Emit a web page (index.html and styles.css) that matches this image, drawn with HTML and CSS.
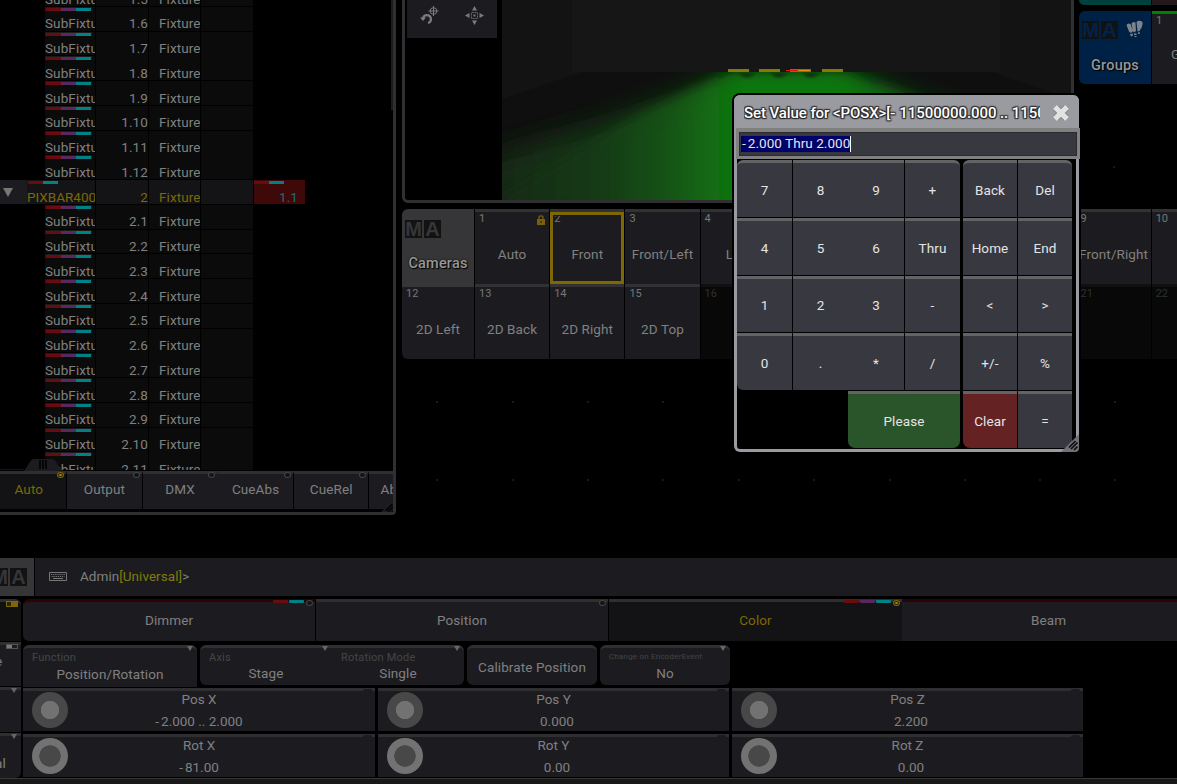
FILE: index.html
```html
<!DOCTYPE html>
<html lang="en">
<head>
<meta charset="utf-8">
<title>Set Value</title>
<link rel="stylesheet" href="styles.css">
</head>
<body>
<main class="desk">
  <svg class="canvas-dots" width="1177" height="558" fill="#191919">
    <path d="M436 401h2v2h-2zM512 401h2v2h-2zM587 401h2v2h-2zM662 401h2v2h-2zM1114 401h2v2h-2zM436 479h2v2h-2zM512 479h2v2h-2zM587 479h2v2h-2zM662 479h2v2h-2zM738 479h2v2h-2zM813 479h2v2h-2zM889 479h2v2h-2zM964 479h2v2h-2zM1039 479h2v2h-2zM1114 479h2v2h-2zM1113 166h2v2h-2z"/>
  </svg>

  <section class="win sheet">
    <div class="scrollbar"></div>
    <div class="rows">
      <div class="row"><b class="name"><i class="marks"></i>SubFixtu</b><b class="id">1.5</b><b class="type">Fixture</b><b class="pad"></b></div>
      <div class="row"><b class="name"><i class="marks"></i>SubFixtu</b><b class="id">1.6</b><b class="type">Fixture</b><b class="pad"></b></div>
      <div class="row joined"><b class="name"><i class="marks"></i>SubFixtu</b><b class="id">1.7</b><b class="type">Fixture</b><b class="pad"></b></div>
      <div class="row"><b class="name"><i class="marks"></i>SubFixtu</b><b class="id">1.8</b><b class="type">Fixture</b><b class="pad"></b></div>
      <div class="row"><b class="name"><i class="marks"></i>SubFixtu</b><b class="id">1.9</b><b class="type">Fixture</b><b class="pad"></b></div>
      <div class="row"><b class="name"><i class="marks"></i>SubFixtu</b><b class="id">1.10</b><b class="type">Fixture</b><b class="pad"></b></div>
      <div class="row joined"><b class="name"><i class="marks"></i>SubFixtu</b><b class="id">1.11</b><b class="type">Fixture</b><b class="pad"></b></div>
      <div class="row"><b class="name"><i class="marks"></i>SubFixtu</b><b class="id">1.12</b><b class="type">Fixture</b><b class="pad"></b></div>
      <div class="row parent"><b class="fold"><svg width="10" height="9"><path d="M0 0h10L5 9z" fill="#777"/></svg></b><b class="name"><i class="marks two"></i>PIXBAR400</b><b class="id">2</b><b class="type">Fixture</b><b class="pad"></b><b class="value"><i class="marks two"></i>1.1</b></div>
      <div class="row"><b class="name"><i class="marks"></i>SubFixtu</b><b class="id">2.1</b><b class="type">Fixture</b><b class="pad"></b></div>
      <div class="row"><b class="name"><i class="marks"></i>SubFixtu</b><b class="id">2.2</b><b class="type">Fixture</b><b class="pad"></b></div>
      <div class="row"><b class="name"><i class="marks"></i>SubFixtu</b><b class="id">2.3</b><b class="type">Fixture</b><b class="pad"></b></div>
      <div class="row"><b class="name"><i class="marks"></i>SubFixtu</b><b class="id">2.4</b><b class="type">Fixture</b><b class="pad"></b></div>
      <div class="row"><b class="name"><i class="marks"></i>SubFixtu</b><b class="id">2.5</b><b class="type">Fixture</b><b class="pad"></b></div>
      <div class="row joined"><b class="name"><i class="marks"></i>SubFixtu</b><b class="id">2.6</b><b class="type">Fixture</b><b class="pad"></b></div>
      <div class="row"><b class="name"><i class="marks"></i>SubFixtu</b><b class="id">2.7</b><b class="type">Fixture</b><b class="pad"></b></div>
      <div class="row"><b class="name"><i class="marks"></i>SubFixtu</b><b class="id">2.8</b><b class="type">Fixture</b><b class="pad"></b></div>
      <div class="row"><b class="name"><i class="marks"></i>SubFixtu</b><b class="id">2.9</b><b class="type">Fixture</b><b class="pad"></b></div>
      <div class="row joined"><b class="name"><i class="marks"></i>SubFixtu</b><b class="id">2.10</b><b class="type">Fixture</b><b class="pad"></b></div>
      <div class="row"><b class="name"><i class="marks"></i>SubFixtu</b><b class="id">2.11</b><b class="type">Fixture</b><b class="pad"></b></div>
    </div>
    <svg class="handle" width="64" height="12"><path d="M0 10.5h24" stroke="#151515"/><path d="M24 12L31 1.500q1-1.500 3-1.500h18q2 0 3 1.500L62 12z" fill="#1c1c20"/><path d="M39 1h2v9h-2zM42 1h2v9h-2zM45 1h2v9h-2z" fill="#050505"/></svg>
    <div class="layers">
      <div class="layer on">Auto<i class="radio"></i></div>
      <div class="layer">Output<i class="radio"></i></div>
      <div class="layer flush">DMX<i class="radio"></i></div>
      <div class="layer">CueAbs<i class="radio"></i></div>
      <div class="layer">CueRel<i class="radio"></i></div>
      <div class="layer last">Ab</div>
    </div>
    <svg class="grip" width="18" height="18"><path d="M18 0v14q0 4-4 4H0z" fill="#1c1c20"/><path d="M8 13.500l6.500-6.500M10 15l6.500-6.500M13 16l3.500-3.500" stroke="#000" stroke-width="1.500"/></svg>
  </section>

  <section class="win viewer">
    <div class="tools">
      <svg width="19" height="19" viewBox="0 0 19 19" fill="none" stroke="#7b7b7b"><path d="M3 12.500a4 4 0 1 1 5 4.500" stroke-width="2.200"/><path d="M0 11.500h6L3 15z" fill="#7b7b7b" stroke="none"/><circle cx="13.500" cy="5" r="3.300"/><path d="M13.500 0v10M8.500 5h10"/></svg>
      <svg width="19" height="19" viewBox="0 0 19 19" fill="#7b7b7b"><path d="M9.500 0l2.500 4.500H7zM9.500 19l2.500-4.500H7zM0 9.500L4.500 7v5zM19 9.500L14.500 7v5zM8.500 8.500h2v2h-2z"/><path d="M6.500 6.500h6v6h-6z" fill="none" stroke="#6a6a6a" stroke-dasharray="2 1"/></svg>
    </div>
    <svg class="scene" width="569" height="200" viewBox="502 0 569 200">
      <defs>
        <linearGradient id="beam" x1="502" x2="1070" y1="0" y2="0" gradientUnits="userSpaceOnUse">
          <stop offset="0" stop-color="#142a15"/><stop offset=".18" stop-color="#153c16"/><stop offset=".3" stop-color="#145514"/><stop offset=".37" stop-color="#126c12"/><stop offset=".42" stop-color="#107810"/><stop offset=".6" stop-color="#107810"/><stop offset=".75" stop-color="#144d16"/><stop offset="1" stop-color="#152a16"/>
        </linearGradient>
        <filter id="wide" x="-20%" y="-60%" width="140%" height="220%"><feGaussianBlur stdDeviation="14"/></filter>
        <filter id="soft" x="-20%" y="-20%" width="140%" height="140%"><feGaussianBlur stdDeviation="6"/></filter>
        <filter id="dim" x="-50%" y="-100%" width="200%" height="300%"><feGaussianBlur stdDeviation="1.500"/></filter>
        <clipPath id="floor"><path d="M502 99l80-27h410l79 27v101H502z"/></clipPath>
      </defs>
      <path d="M502 0h569v200H502z" fill="#131313"/>
      <path d="M572 0h428v72H572z" fill="#161616"/>
      <path d="M502 99l80-27h410l79 27v101H502z" fill="#0f0f0f"/>
      <g clip-path="url(#floor)">
        <path d="M440 170L600 125l90-30 48-25h108l45 21 80 30 180 60v80H440z" fill="url(#beam)" filter="url(#wide)"/>
        <path d="M480 210L580 150l60-36 45-20 45-19h113l55 18 50 20 60 97z" fill="url(#beam)" filter="url(#soft)" opacity=".85"/>
        <path d="M738 73h18l-6 4h-6zM770 73h18l-6 4h-6zM802 73h18l-6 4h-6z" fill="#0a2e0a" filter="url(#dim)"/>
      </g>
      <path d="M728 69h21v3h-21zM759 69h21v3h-21zM822 69h21v3h-21z" fill="#8c7705"/>
      <path d="M790 69h21v3h-21z" fill="#b85a00"/><path d="M786 70.500h12" stroke="#f20d0d"/><path d="M798 70.500h12" stroke="#e88a10"/>
    </svg>
  </section>

  <section class="pool cameras">
    <div class="head"><span class="ma"><i>M</i><i>A</i></span><span class="title">Cameras</span></div>
    <div class="cell"><i class="no">1</i>Auto<svg class="lock" width="8" height="10"><path d="M0 4h8v6H0z" fill="#7c5f06"/><path d="M2 5V2.500q0-1.700 2-1.700t2 1.700V5" fill="none" stroke="#7c5f06" stroke-width="1.300"/><path d="M3.500 6h1v2h-1z" fill="#1c1c20"/></svg></div>
    <div class="cell sel"><i class="no">2</i>Front</div>
    <div class="cell"><i class="no">3</i>Front/Left</div>
    <div class="cell"><i class="no">4</i>Left</div>
    <div class="cell"></div>
    <div class="cell"></div>
    <div class="cell"></div>
    <div class="cell"></div>
    <div class="cell"><i class="no">9</i>Front/Right</div>
    <div class="cell"><i class="no">10</i></div>
    <div class="cell corner"><i class="no">12</i>2D Left</div>
    <div class="cell"><i class="no">13</i>2D Back</div>
    <div class="cell"><i class="no">14</i>2D Right</div>
    <div class="cell"><i class="no">15</i>2D Top</div>
    <div class="cell empty"><i class="no">16</i></div>
    <div class="cell empty"></div>
    <div class="cell empty"></div>
    <div class="cell empty"></div>
    <div class="cell empty"></div>
    <div class="cell empty"><i class="no">21</i></div>
    <div class="cell empty"><i class="no">22</i></div>
  </section>

  <section class="groups">
    <div class="prev"></div><div class="prev next"></div>
    <div class="head"><span class="ma"><i>M</i><i>A</i></span>
      <svg class="lamps" width="18" height="18" fill="#7d8389"><path d="M.5 5Q2 2.500 4.500 4l2.500 7-2 2-2-1.500zM5.500 3.500Q7 1 9.500 2.500L10 11l-2 1.500-1.200-1.500zM10.500 2q2.500-2.500 6 0 .8 4.500-3 9l-2 .5zM4 14l2.500-.5.5 2-2 1zM8 13.500h2.500v1.500H8zM12 12.500l2-.5-.5 2H12zM8.500 16h2v1h-2z"/></svg>
      <span class="title">Groups</span></div>
    <div class="cell"><i class="no">1</i>G</div>
  </section>

  <section class="dialog">
    <header><span class="caption">Set Value for &lt;POSX&gt;[<s>-</s>11500000.000 .. 11500000.000]</span>
      <svg width="18" height="18" viewBox="0 0 18 18"><path d="M3.500 3.500l11 11M14.500 3.500l-11 11" stroke="#5c5c60" stroke-width="6.500"/><path d="M3 3l12 12M15 3L3 15" stroke="#e2e2e2" stroke-width="5.500"/></svg></header>
    <div class="entry"><div class="field"><mark><s>-</s>2.000 Thru 2.000</mark></div></div>
    <div class="keys">
      <div class="pad-a">
        <div class="key tl">7</div><div class="key flush">8</div><div class="key">9</div><div class="key end tr">+</div>
        <div class="key">4</div><div class="key flush">5</div><div class="key">6</div><div class="key end">Thru</div>
        <div class="key">1</div><div class="key flush">2</div><div class="key">3</div><div class="key end">-</div>
        <div class="key bl">0</div><div class="key flush">.</div><div class="key">*</div><div class="key end">/</div>
        <div class="key end please">Please</div>
      </div>
      <div class="pad-b">
        <div class="key tl">Back</div><div class="key end tr">Del</div>
        <div class="key">Home</div><div class="key end">End</div>
        <div class="key">&lt;</div><div class="key end">&gt;</div>
        <div class="key">+/-</div><div class="key end">%</div>
        <div class="key clear">Clear</div><div class="key end">=</div>
      </div>
    </div>
    <svg class="grip" width="18" height="18"><path d="M18 0v14q0 4-4 4H0z" fill="#707077"/><path d="M8 13.500l6.500-6.500M10 15l6.500-6.500M13 16l3.500-3.500" stroke="#0c0c0c" stroke-width="1.700"/></svg>
  </section>
</main>

<div class="cmd">
  <div class="badge"><span class="ma"><i>M</i><i>A</i></span></div>
  <div class="line">
    <svg width="18" height="9"><path d="M.5.500h17v8H.5z" fill="none" stroke="#777"/><path d="M2 2.500h14M2.500 4.500h13" stroke="#777" stroke-dasharray="1.200 .9"/><path d="M4 6.500h10" stroke="#777"/></svg>
    <span>Admin<em>[Universal]</em>&gt;</span>
  </div>
</div>

<div class="encoders">
  <div class="side">
    <div class="s0"><i class="toggle gold"></i></div>
    <div class="s1"><i class="toggle"></i>e</div>
    <div class="s2"><i class="tri"></i></div>
    <div class="s3"><i class="tri"></i>al</div>
  </div>
  <div class="bank">
    <div class="tabs">
      <div class="tab warm first">Dimmer<i class="chips"><u></u><u class="c"></u></i><i class="radio"></i></div>
      <div class="tab">Position<i class="radio"></i></div>
      <div class="tab on">Color<i class="chips"><u></u><u class="p"></u><u class="c"></u></i><i class="radio"></i></div>
      <div class="tab warm">Beam</div>
    </div>
    <div class="options">
      <div class="opt fn"><small>Function</small><span>Position/Rotation</span><i class="tri"></i></div>
      <div class="opt axis"><small>Axis</small><span>Stage</span><i class="tri"></i></div>
      <div class="opt rot"><small>Rotation Mode</small><span>Single</span><i class="tri"></i></div>
      <div class="opt cal"><span>Calibrate Position</span></div>
      <div class="opt chg"><small>Change on EncoderEvent</small><span>No</span><i class="tri"></i></div>
    </div>
    <div class="dials">
      <div class="dial"><i class="knob"></i><span>Pos X</span><span><s>-</s>2.000 .. 2.000</span></div>
      <div class="dial"><i class="knob"></i><span>Pos Y</span><span class="pos">0.000</span></div>
      <div class="dial"><i class="knob"></i><span>Pos Z</span><span class="pos">2.200</span></div>
      <div class="dial"><i class="knob inv"></i><span>Rot X</span><span><s>-</s>81.00</span></div>
      <div class="dial"><i class="knob inv"></i><span>Rot Y</span><span class="pos">0.00</span></div>
      <div class="dial"><i class="knob inv"></i><span>Rot Z</span><span class="pos">0.00</span></div>
    </div>
  </div>
</div>
<div class="edge"></div>
</body>
</html>
```

FILE: styles.css
```css
* { box-sizing: border-box; }
body {
  margin: 0; width: 1177px; height: 784px; overflow: hidden;
  background: #000; color: #808080;
  font: 400 13.5px/18px Roboto, "Noto Sans", sans-serif;
  letter-spacing: .1px;
}
i, em, b { font-style: normal; font-weight: 400; }
s { text-decoration: none; margin-right: 2px; }
svg { display: block; flex: none; }

.desk { position: relative; height: 558px; overflow: hidden; }
.canvas-dots { position: absolute; left: 0; top: 0; }
.win { position: absolute; background: #000; border: 2px solid #303032; }

/* fixture sheet */
.sheet {
  left: -2px; top: -4px; width: 398px; height: 519px;
  border-width: 2px 3px 3px 2px; border-radius: 0 0 4px 0;
  padding-top: 2px; overflow: hidden;
}
.scrollbar { position: absolute; right: 0; top: 0; width: 2px; height: 112px; background: #1b1b20; }
.rows { height: 470px; overflow: hidden; }
.rows .row:first-child { margin-top: -18px; }
.row {
  display: grid; grid-template-columns: 50px 52px 51px 52px 51px;
  column-gap: 1px; height: 24.75px; padding-left: 45px;
}
.row b { position: relative; background: #0b0b0b; border-bottom: 1px solid #000; padding-top: 7.700px; overflow: hidden; white-space: nowrap; }
.row.joined b:not(.name) { border-bottom-color: #0b0b0b; }
.row .id { text-align: right; }
.row .type { padding-left: 10px; }
.marks {
  position: absolute; left: 0; top: 0; width: 47px; height: 4px;
  border: 1px solid #1b1b1c; border-bottom-width: 0;
  background: linear-gradient(90deg, #6b0b0e 15px, #56295f 15px 30px, #008183 30px);
}
.marks.two { width: 31px; border: 0; left: 1px; top: 1px; height: 3px; background: linear-gradient(90deg, #6b0b0e 15px, #008183 15px 30px, transparent 30px); }
.row.parent { grid-template-columns: 26px 68px 52px 51px 52px 51px; padding-left: 0; }
.row.parent b { background: #141416; color: #7d6805; }
.row.parent .fold { background: #1b1b20; margin-right: -1px; padding: 8px 0 0 3px; }
.row.parent .name { letter-spacing: 0; }
.row.parent .value { background: #400909; color: #167076; text-align: right; padding-right: 7px; }
.row.parent .value .marks { left: 0; }
.handle { position: absolute; left: 0; top: 461px; }
.layers { display: flex; height: 38px; margin-left: -8.500px; margin-top: 1px; width: 460px; }
.layer {
  position: relative; width: 75.600px; flex: none; height: 38px; padding-top: 6px; text-align: center;
  background: #1c1c20; border-top: 3px solid #2f2f31; border-right: 1px solid #000;
}
.layer.flush { border-right-color: #1c1c20; }
.layer.on { background: #131315; color: #7d6805; }
.layer.last { text-align: left; padding-left: 11px; }
.radio { position: absolute; right: 2px; top: -2px; width: 7px; height: 6px; border: 1px solid #444; border-radius: 50%; background: #141414; }
.on .radio { border-color: #7d6805; background: radial-gradient(#a08505 1px, #2a2402 1.500px); }
.sheet .grip { position: absolute; right: -3px; bottom: -3px; }

/* 3D viewer */
.viewer { left: 402px; top: -8px; width: 672px; height: 211px; border-width: 3px; border-radius: 6px; display: flex; padding: 5px 0 0 2px; overflow: hidden; }
.tools { flex: none; display: flex; justify-content: space-between; align-items: flex-start; width: 90px; height: 38px; padding: 6px 13px 0 13px; background: #1c1c20; margin-right: 5px; }

/* pools */
.cell {
  position: relative; background: #1c1c20; border-top: 3px solid #323234;
  text-align: center; padding-top: 33px; overflow: hidden; white-space: nowrap;
}
.no { position: absolute; left: 4px; top: 0; font-size: 11px; line-height: 14px; letter-spacing: 0; color: #777; }
.cameras {
  position: absolute; left: 402px; top: 209px;
  display: grid; grid-template-columns: 72px repeat(10, 74.200px); grid-auto-rows: 75px; column-gap: 1px;
}
.head { position: relative; background: #363638; border-radius: 6px 0 0 0; display: flex; flex-direction: column; }
.title { color: #979797; font-weight: 500; font-size: 14.500px; text-align: center; letter-spacing: .2px; text-shadow: 0 0 2px #000, 1px 1px 1px #000; }
.ma { display: flex; gap: 2px; }
.ma i { width: 17px; height: 18px; background: #121213; color: #363638; font: 700 20px/19px "Liberation Sans", sans-serif; display: flex; justify-content: center; letter-spacing: 0; overflow: hidden; }
.cameras .ma { margin: 11px 0 0 3px; }
.cameras .title { margin-top: 17px; }
.cell.sel::after { content: ""; position: absolute; inset: 0; border: 3px solid #7d6805; box-shadow: inset 0 0 0 1px #1d1b13; }
.cell.corner { border-radius: 0 0 0 6px; border-top-color: #363638; }
.cell.empty { background: #080808; border-top-color: #101010; }
.cell.empty .no { color: #303030; }
.lock { position: absolute; right: 4px; top: 3px; }

.groups { position: absolute; left: 1079px; top: 0; display: grid; grid-template: 5px 73px / 72px 74px; gap: 6px 1px; }
.prev { background: #00413f; border-radius: 0 0 0 6px; }
.prev.next { background: linear-gradient(#2a1519 2px, #1c1c20 2px); border-radius: 0; }
.groups .head { background: #002146; border-radius: 6px 0 0 6px; }
.groups .ma { margin: 10px 0 0 3px; }
.groups .ma i { color: #00234b; }
.groups .title { margin-top: 18px; }
.lamps { position: absolute; left: 47px; top: 9px; }
.groups .cell { border-top-color: #008100; text-align: left; padding: 31px 0 0 19px; }

/* value dialog */
.dialog {
  position: absolute; left: 734px; top: 95px; width: 345px; height: 357px;
  background: #000; border: solid #9a9ba0; border-width: 0 3px 3px; border-radius: 6px;
  box-shadow: 0 0 0 2px #000; color: #e4e4e4;
}
.dialog header {
  display: flex; justify-content: space-between; align-items: center;
  height: 33px; margin: 0 -3px; padding: 2px 9px 0 10px; background: #9a9ba0; border-radius: 6px 6px 0 0;
}
.caption {
  width: 296px; overflow: hidden; white-space: nowrap; color: #fff; font-weight: 500; font-size: 15px; letter-spacing: -.08px;
  line-height: 24px; text-shadow: 0 0 2px #222, 1px 1px 1px #222, -1px -1px 1px #333, 1px -1px 1px #333, -1px 1px 1px #333;
}
.caption s { margin-right: 4px; }
.entry { margin: 0 -4px 0 -1px; height: 31px; background: #808080; padding: 4px 3px 3px; }
.field { height: 24px; background: #383840; border: 1px solid #2b2b2e; padding: 3px 1px; display: flex; }
mark { background: #00006a; color: #e4e4e4; line-height: 15px; padding-left: 1px; border-right: 1px solid #fff; letter-spacing: .05px; }
.keys { display: flex; gap: 3px; padding-top: 1px; }
.pad-a, .pad-b { display: grid; grid-auto-rows: 57.750px; }
.pad-a { grid-template-columns: 56px 55px 57px 55px; }
.pad-b { grid-template-columns: 55px 54px; }
.key {
  background: #383840; border-top: 3px solid #636366; margin: 0 1px 1px 0;
  display: flex; align-items: center; justify-content: center;
}
.key.flush { margin-right: 0; }
.key.end { margin-right: 0; }
.tl { border-top-left-radius: 6px; }
.tr { border-top-right-radius: 6px; }
.bl { border-bottom-left-radius: 6px; }
.please { grid-column: 3 / 5; background: #2a552b; border-radius: 0 0 7px 7px; }
.clear { background: #642223; border-radius: 0 0 0 7px; }
.dialog .grip { position: absolute; right: -3px; bottom: -3px; }

/* command line */
.cmd { display: flex; gap: 1px; height: 38px; }
.badge { width: 34px; background: #363638; padding: 10px 0 0; overflow: hidden; }
.badge .ma { margin-left: -9px; }
.badge .ma i { flex: none; }
.line { flex: 1; display: flex; align-items: center; gap: 13px; background: #1c1c20; padding: 0 0 2px 14px; letter-spacing: .05px; }
.line em { color: #7f7d0a; }

/* encoder bar */
.encoders { display: flex; gap: 2px; height: 182px; padding-top: 3px; }
.side { flex: none; width: 21px; display: grid; grid-template-rows: 42px 44px 45px 45px; row-gap: 1px; }
.side > div { position: relative; background: #1c1c20; border-top: 3px solid #2f2f31; }
.side .s0 { background: #111; border-top-right-radius: 6px; }
.side .s1 { padding-top: 7px; text-indent: -5px; }
.side .s3 { padding-top: 18px; text-indent: -5px; border-bottom-right-radius: 6px; }
.toggle { position: absolute; left: 6px; top: -1px; width: 12px; height: 5px; border: 1px solid #555; background: linear-gradient(90deg, #777 5px, #1c1c20 5px); }
.toggle.gold { border-color: #7d6805; background: linear-gradient(90deg, #2b2503 4px, #7d6805 4px); height: 6px; }
.tri { position: absolute; right: 4px; top: -2px; border: 3px solid transparent; border-top: 5px solid #666; border-bottom: 0; }
.bank { flex: 1; min-width: 0; }
.tabs { display: grid; grid-template-columns: 292px 292px 292px 293px; column-gap: 1px; height: 42px; }
.tab { position: relative; background: #1c1c20; border-top: 3px solid #2f2f31; text-align: center; padding-top: 9px; }
.tab.warm { border-top-color: #2c0407; }
.tab.first { border-radius: 6px 0 0 6px; }
.tab.on { background: #131315; color: #7d6805; margin-right: -1px; }
.chips { position: absolute; right: 11px; top: -2px; display: flex; gap: 1px; }
.chips u { width: 15px; height: 3px; background: #6b0b0e; border-radius: 1px; }
.chips .c { background: #008183; }
.chips .p { background: #56295f; }
.options { display: grid; grid-template-columns: 174px 132px 132px 130px 130px; padding-top: 4px; height: 47px; }
.opt { position: relative; height: 40px; background: #1c1c20; border-top: 3px solid #2f2f31; border-radius: 6px; text-align: center; padding-top: 16px; }
.opt small { position: absolute; left: 9px; top: 1px; font-size: 11px; color: #454545; letter-spacing: .2px; white-space: nowrap; }
.opt.fn { height: 42px; border-radius: 6px 6px 0 0; padding-top: 17px; }
.opt.axis { margin-left: 3px; width: 132px; border-radius: 6px 0 0 6px; }
.opt.rot { margin-left: 3px; width: 132px; border-radius: 0 6px 6px 0; }
.opt.cal { margin-left: 6px; width: 130px; padding-top: 10px; }
.opt.chg { margin-left: 9px; width: 130px; }
.opt.chg small { font-size: 8px; line-height: 16px; }
.dials { display: grid; grid-template-columns: 352px 351px 351px; grid-template-rows: 43px 43px; gap: 3px; }
.dial { position: relative; background: #1c1c20; border-top: 3px solid #2f2f31; text-align: center; display: flex; flex-direction: column; gap: 4.500px; letter-spacing: 0; }
.dial span { margin-top: -1px; }
.dial::after { content: ""; position: absolute; right: 3px; top: -2px; width: 9px; height: 2px; background: #1c1c20; border-radius: 2px 2px 0 0; }
.dial .pos { padding-left: 7px; }
.knob { position: absolute; left: 9px; top: 1px; width: 36px; height: 36px; border-radius: 50%; background: radial-gradient(circle, #727272 8.800px, #484848 9.400px); }
.knob.inv { background: radial-gradient(circle, #484848 10.400px, #727272 11px); }
.edge { height: 6px; background: #181818; border-top: 1px solid #363636; }
```
